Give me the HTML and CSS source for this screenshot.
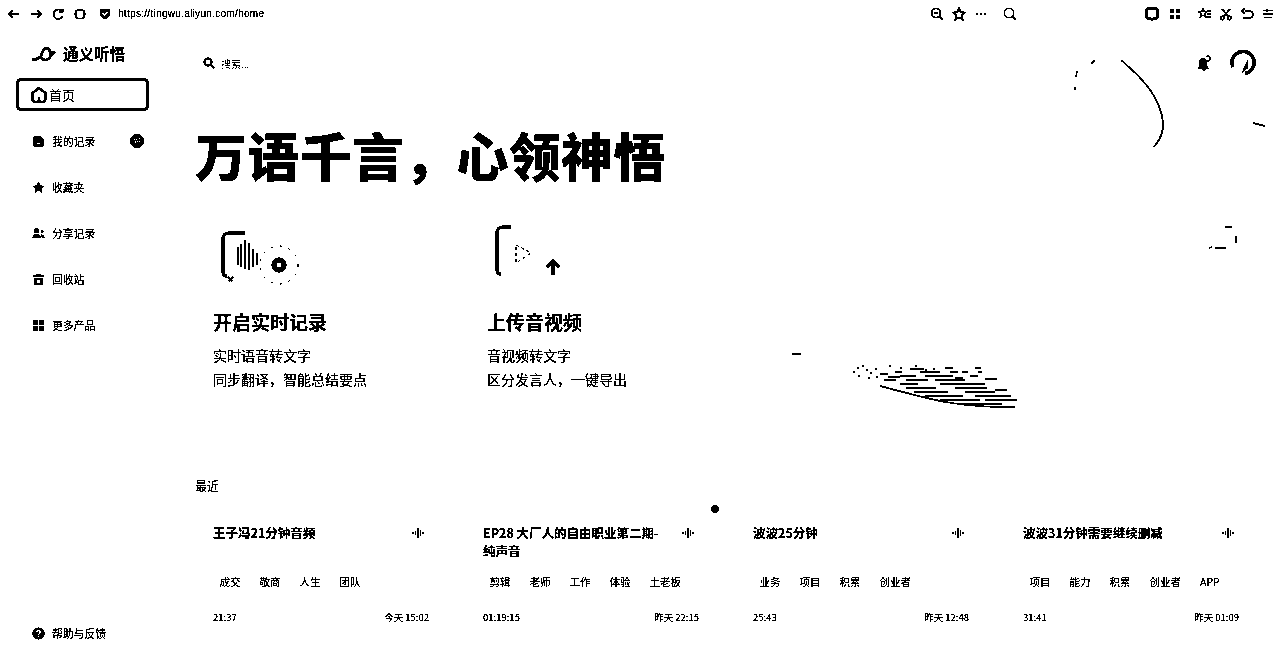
FILE: index.html
```html
<!DOCTYPE html>
<html lang="zh">
<head>
    <meta charset="UTF-8">
    <title>通义听悟</title>
    <link rel="stylesheet" href="styles.css">
</head>
<body>

    <!-- Filtro de blanco y negro -->
    <svg class="filters" width="0" height="0">
        <filter id="binarize" color-interpolation-filters="sRGB" x="0" y="0" width="100%" height="100%">
            <feColorMatrix type="saturate" values="0"/>
            <feComponentTransfer>
                <feFuncR type="discrete" tableValues="0 0 1"/>
                <feFuncG type="discrete" tableValues="0 0 1"/>
                <feFuncB type="discrete" tableValues="0 0 1"/>
            </feComponentTransfer>
        </filter>
    </svg>

    <div class="page">

        <!-- Barra del navegador -->
        <header class="browser-bar">
            <div class="bar-left">
                <svg class="bar-icon" viewBox="0 0 14 14"><path d="M12 7H2M6 3L2 7l4 4" class="line"/></svg>
                <svg class="bar-icon" viewBox="0 0 14 14"><path d="M2 7h10M8 3l4 4-4 4" class="thin"/></svg>
                <svg class="bar-icon" viewBox="0 0 14 14"><path d="M11 4.500A4.700 4.700 0 1 0 11.500 9M11.500 2v3h-3" class="line"/></svg>
                <svg class="bar-icon" viewBox="0 0 14 14"><rect x="2.500" y="3" width="9" height="8.500" rx="3" class="line"/></svg>
                <svg class="bar-icon shield" viewBox="0 0 14 14"><path d="M2 2.500h10v4.500c0 2.500-2.500 4-5 5-2.500-1-5-2.500-5-5z"/><path d="M4.500 6l2 2 3-3" class="white"/></svg>
                <span class="url">https://tingwu.aliyun.com/home</span>
            </div>
            <div class="bar-right">
                <div class="bar-group group-page">
                    <svg class="bar-icon" viewBox="0 0 14 14"><circle cx="6" cy="6" r="4.500" class="line"/><path d="M4 6h4M9.500 9.500L13 13" class="line"/></svg>
                    <svg class="bar-icon" viewBox="0 0 14 14"><path d="M7 1.500l1.700 3.700 4 .5-3 2.700.8 4L7 10.500l-3.500 1.900.8-4-3-2.700 4-.5z" class="line"/></svg>
                    <svg class="bar-icon" viewBox="0 0 14 14"><path d="M2 6h2v2H2zM6 6h2v2H6zM10 6h2v2h-2z"/></svg>
                </div>
                <svg class="bar-icon find" viewBox="0 0 14 14"><circle cx="6" cy="6" r="4.700" class="thin"/><path d="M9.500 9.500L13 13" class="thin"/></svg>
                <div class="bar-group group-tools">
                    <svg class="bar-icon" viewBox="0 0 14 14"><path d="M2.500 1.500h9a1 1 0 0 1 1 1v8a1 1 0 0 1-1 1H9L7 13l-2-1.500H2.500a1 1 0 0 1-1-1v-8a1 1 0 0 1 1-1z" class="heavy"/></svg>
                    <svg class="bar-icon" viewBox="0 0 14 14"><path d="M2 2h4v4H2zM8 2h4v4H8zM2 8h4v4H2zM8 8h4v4H8z"/></svg>
                </div>
                <div class="bar-group group-edit">
                    <svg class="bar-icon" viewBox="0 0 14 14"><path d="M5 1.500l1.200 3 3 .3-2.300 2 .7 3.200L5 8.300 2.400 10l.7-3.200-2.300-2 3-.3zM9 4h4M9 7h4M8 10h5" class="thin"/></svg>
                    <svg class="bar-icon" viewBox="0 0 14 14"><circle cx="3.500" cy="11" r="1.800" class="thin"/><circle cx="10.500" cy="11" r="1.800" class="thin"/><path d="M3 2l6.500 7.500M11 2L4.500 9.500" class="line"/></svg>
                    <svg class="bar-icon" viewBox="0 0 14 14"><path d="M5 4h4.500a3.500 3.500 0 0 1 0 7H3M4.500 1.500L2 4l2.500 2.500" class="line"/></svg>
                    <svg class="bar-icon" viewBox="0 0 14 14"><path d="M2 3.500h10M2 7h10M3.500 10.500h7M6 2v3" class="line"/></svg>
                </div>
            </div>
        </header>

        <div class="app">

            <!-- Barra lateral -->
            <aside class="sidebar">
                <div class="logo">
                    <svg class="logo-mark" viewBox="0 0 28 18"><path d="M1 15c4 1 7 0 9-3 1-4 3-8 6-8 2 0 3 2 3 5l5-1-4 3c-1 3-3 5-6 5-2 0-3-1-4-3" class="logo-line"/></svg>
                    <span>通义听悟</span>
                </div>
                <a class="nav-home">
                    <svg class="home-icon" viewBox="0 0 18 18"><path d="M9 2L2.500 7v6a3 3 0 0 0 3 3h7a3 3 0 0 0 3-3V7zM9 11v4" class="home-line"/></svg>
                    <span>首页</span>
                </a>
                <nav class="nav-list">
                    <a class="nav-item">
                        <svg class="nav-icon" viewBox="0 0 14 14"><path d="M1.500 1.500h8l3 3v8h-11zM5 8h4v1.500H5z" fill-rule="evenodd"/></svg>
                        <span>我的记录</span>
                        <em class="nav-badge">新</em>
                    </a>
                    <a class="nav-item">
                        <svg class="nav-icon" viewBox="0 0 14 14"><path d="M7 .5l2 4.300 4.700.5-3.500 3.200 1 4.600L7 10.300l-4.200 2.800 1-4.600L.3 5.300 5 4.800z"/></svg>
                        <span>收藏夹</span>
                    </a>
                    <a class="nav-item">
                        <svg class="nav-icon" viewBox="0 0 14 14"><circle cx="5" cy="4" r="2.800"/><path d="M.5 12c0-3 2-4.500 4.500-4.500S9.500 9 9.500 12z"/><circle cx="11" cy="5" r="1.500"/><path d="M10.500 12c0-1.500-.3-3-1-4 2 0 4 1 4 4z"/></svg>
                        <span>分享记录</span>
                    </a>
                    <a class="nav-item">
                        <svg class="nav-icon" viewBox="0 0 14 14"><path d="M1 2.500h12v1.500H1zM2 5h10v8H2zM5 7v3.500h4V7z" fill-rule="evenodd"/><path d="M5 1h4v1.500H5z"/></svg>
                        <span>回收站</span>
                    </a>
                    <a class="nav-item">
                        <svg class="nav-icon" viewBox="0 0 14 14"><path d="M1 1h5.300v5.300H1zM7.700 1H13v5.300H7.700zM1 7.700h5.300V13H1zM7.700 7.700H13V13H7.700z"/></svg>
                        <span>更多产品</span>
                    </a>
                </nav>
                <a class="nav-item nav-help">
                    <svg class="nav-icon" viewBox="0 0 14 14"><circle cx="7" cy="7" r="6.500"/><path d="M5 5.500C5 3.500 9 3.500 9 5.500 9 7 7 7 7 8.500M7 10v1.200" class="white"/></svg>
                    <span>帮助与反馈</span>
                </a>
            </aside>

            <!-- Contenido principal -->
            <main class="content">
                <div class="top-row">
                    <div class="search">
                        <svg class="search-icon" viewBox="0 0 12 12"><circle cx="5" cy="5" r="3.500" class="heavy"/><path d="M7.500 7.500L11 11" class="heavy"/></svg>
                        <span>搜索...</span>
                    </div>
                    <div class="user-tools">
                        <svg class="bell" viewBox="0 0 16 16"><path d="M7 3c3 0 4 2 4 4v4l2 2.500H1.500L3 11V7c0-2 1-4 4-4z"/><circle cx="8" cy="14.500" r="1.500"/><path d="M10 1.500c2-1 4 0 4 2s-2 3-3.500 2" class="thin"/></svg>
                        <svg class="avatar" viewBox="0 0 26 26"><path d="M3 17A11 11 0 1 1 22 19c-2 3-4 4-7 4" class="avatar-line"/><path d="M18 9l-4 8-2 6 6-5z"/></svg>
                    </div>
                </div>

                <h1>万语千言，心领神悟</h1>

                <section class="hero-cards">
                    <div class="hero-card">
                        <svg class="hero-art" viewBox="0 0 110 60">
                            <path d="M14 51c-3 0-4-2-4-4V14c0-4 2-6 6-6h16" class="art-thick"/>
                            <path d="M25 22v18M28 19v23M32 15v29M36 18v27M40 24v18M44 28v12" class="art-bar"/>
                            <circle cx="66" cy="40" r="19" class="art-dots"/>
                            <circle cx="66" cy="40" r="5" class="art-ring"/>
                            <path d="M16 56l4-4M15 52l4 4" class="art-bar"/>
                        </svg>
                        <h2>开启实时记录</h2>
                        <p>实时语音转文字<br>同步翻译，智能总结要点</p>
                    </div>
                    <div class="hero-card">
                        <svg class="hero-art" viewBox="0 0 110 60">
                            <path d="M14 49c-3 0-4-2-4-4V8c0-4 2-6 6-6h8" class="art-thick"/>
                            <path d="M29 20l15 8-15 10z" class="art-play"/>
                            <path d="M66 50V37M60 42l6-6 6 6" class="art-arrow"/>
                        </svg>
                        <h2>上传音视频</h2>
                        <p>音视频转文字<br>区分发言人，一键导出</p>
                    </div>
                </section>

                <h3 class="recent-label">最近</h3>

                <section class="recent-grid">
                    <article class="record">
                        <div class="record-head">
                            <h4>王子冯21分钟音频</h4>
                            <svg class="wave" viewBox="0 0 12 12"><path d="M1 5v2M3.500 4v4M6 1v10M8.500 3v6M11 5v2"/></svg>
                        </div>
                        <div class="tags"><span>成交</span><span>敬商</span><span>人生</span><span>团队</span></div>
                        <div class="record-foot"><span>21:37</span><span>今天 15:02</span></div>
                    </article>
                    <article class="record">
                        <div class="record-head">
                            <h4>EP28 大厂人的自由职业第二期-纯声音</h4>
                            <svg class="wave" viewBox="0 0 12 12"><path d="M1 5v2M3.500 4v4M6 1v10M8.500 3v6M11 5v2"/></svg>
                        </div>
                        <div class="tags"><span>剪辑</span><span>老师</span><span>工作</span><span>体验</span><span>土老板</span></div>
                        <div class="record-foot"><span>01:19:15</span><span>昨天 22:15</span></div>
                    </article>
                    <article class="record">
                        <div class="record-head">
                            <h4>波波25分钟</h4>
                            <svg class="wave" viewBox="0 0 12 12"><path d="M1 5v2M3.500 4v4M6 1v10M8.500 3v6M11 5v2"/></svg>
                        </div>
                        <div class="tags"><span>业务</span><span>项目</span><span>积累</span><span>创业者</span></div>
                        <div class="record-foot"><span>25:43</span><span>昨天 12:48</span></div>
                    </article>
                    <article class="record">
                        <div class="record-head">
                            <h4>波波31分钟需要继续删减</h4>
                            <svg class="wave" viewBox="0 0 12 12"><path d="M1 5v2M3.500 4v4M6 1v10M8.500 3v6M11 5v2"/></svg>
                        </div>
                        <div class="tags"><span>项目</span><span>能力</span><span>积累</span><span>创业者</span><span>APP</span></div>
                        <div class="record-foot"><span>31:41</span><span>昨天 01:09</span></div>
                    </article>
                </section>
            </main>
        </div>

        <!-- Trazos decorativos del fondo -->
        <svg class="backdrop" viewBox="0 0 1280 664">
            <path d="M1121 60C1142 78 1160 96 1163 122 1164 132 1160 140 1154 147" class="swirl"/>
            <path d="M1095 60l-4 4M1077 71l-1 6M1075 87v3M1253 123l12 3M1212 247l-3 1M1225 227h7M1236 236v7M1215 248h11M792 354h9" class="swirl"/>
            <path d="M880 386C920 396 950 408 1015 407" class="swirl"/>
            <path d="M880 374h8M888 377h12M884 380h12M895 372h7M900 376h16M906 380h22M900 384h18M906 388h30M914 392h34M925 396h38M940 400h40M958 404h44M910 369h14M920 372h20M925 376h28M935 380h30M940 384h38M955 388h32M965 392h30M975 396h36M985 400h32M975 368h6M945 368h8M950 372h8M962 372h6M955 378h8M975 384h10M985 379h12M970 376h8M995 390h12M978 372h4" class="feather"/>
            <path d="M853 372h2M857 368h2M862 366h2M866 370h2M870 373h2M875 369h2M858 376h2M868 378h2M876 377h2M889 366h2M900 368h2M915 366h2M925 370h2M933 369h2" class="feather"/>
            <circle cx="715" cy="509" r="4"/>
        </svg>
    </div>

</body>
</html>
```

FILE: styles.css
```css
/* Estilos generales */
html, body {
    margin: 0;
    padding: 0;
    background: #fff;
}

body {
    font-family: "Noto Sans CJK SC", "Noto Sans", sans-serif;
    color: #000;
    overflow: hidden;
}

.filters {
    position: absolute;
}

.page {
    position: relative;
    width: 1280px;
    height: 664px;
    background: #fff;
    overflow: hidden;
    filter: url(#binarize);
}

.line, .thin, .heavy, .white, .home-line, .logo-line, .art-thick, .art-bar, .art-dots, .art-play, .art-ring, .art-arrow, .swirl, .feather, .avatar-line {
    fill: none;
    stroke: #000;
}

.line { stroke-width: 1.7; }
.thin { stroke-width: 1.2; }
.heavy { stroke-width: 2.2; }
.white { stroke: #fff; stroke-width: 1.6; }

/* Barra del navegador */
.browser-bar {
    display: flex;
    justify-content: space-between;
    align-items: center;
    height: 27px;
    padding: 0 5px 0 7px;
}

.bar-left, .bar-right, .bar-group {
    display: flex;
    align-items: center;
}

.bar-left {
    gap: 8px;
}

.bar-icon {
    width: 14px;
    height: 14px;
    flex: none;
}

.shield {
    margin-left: 3px;
}

.url {
    font-family: "Liberation Sans", sans-serif;
    font-size: 10px;
    letter-spacing: .3px;
    margin-left: -2px;
}

.group-page {
    gap: 8px;
}

.find {
    margin-left: 15px;
}

.group-tools {
    gap: 9px;
    margin-left: 128px;
}

.group-edit {
    gap: 7px;
    margin-left: 16px;
}

/* Barra lateral */
.app {
    display: flex;
    height: 637px;
}

.sidebar {
    display: flex;
    flex-direction: column;
    width: 165px;
    flex: none;
    box-sizing: border-box;
    padding: 16px 16px 19px;
}

.logo {
    display: flex;
    align-items: center;
    gap: 4px;
    height: 20px;
    padding-left: 15px;
    font-size: 15.500px;
    font-weight: 700;
}

.logo-mark {
    width: 28px;
    height: 18px;
}

.logo-line {
    stroke-width: 2.400;
}

.nav-home {
    display: flex;
    align-items: center;
    gap: 1px;
    width: 133px;
    height: 33px;
    margin-top: 15px;
    box-sizing: border-box;
    padding-left: 11px;
    border: 3px solid #000;
    border-radius: 5px;
    font-size: 13px;
}

.home-icon {
    width: 18px;
    height: 18px;
}

.home-line {
    stroke-width: 2.400;
}

.nav-list {
    display: flex;
    flex-direction: column;
    margin-top: 7px;
}

.nav-item {
    display: flex;
    align-items: center;
    gap: 7px;
    height: 46px;
    padding-left: 16px;
    font-size: 10.800px;
}

.nav-icon {
    width: 13px;
    height: 13px;
    flex: none;
}

.nav-badge {
    display: flex;
    align-items: center;
    justify-content: center;
    width: 14px;
    height: 14px;
    margin-left: auto;
    margin-right: 5px;
    border-radius: 50%;
    background: #000;
    color: #fff;
    font-size: 8px;
    font-style: normal;
}

.nav-help {
    height: 24px;
    margin-top: auto;
}

/* Contenido principal */
.content {
    flex: 1;
    padding: 26px 0 0 30px;
    min-width: 0;
}

.top-row {
    display: flex;
    justify-content: space-between;
    align-items: center;
    height: 20px;
    padding: 0 24px 0 8px;
}

.search {
    display: flex;
    align-items: center;
    gap: 6px;
    font-size: 10px;
    color: #555;
}

.search-icon {
    width: 12px;
    height: 12px;
}

.user-tools {
    display: flex;
    align-items: center;
    gap: 18px;
}

.bell {
    width: 16px;
    height: 16px;
}

.avatar {
    width: 26px;
    height: 26px;
}

.avatar-line {
    stroke-width: 3.400;
}

h1 {
    margin: 52px 0 0;
    font-size: 52px;
    line-height: 60px;
    font-weight: 900;
    letter-spacing: .3px;
}

.hero-cards {
    display: flex;
    margin-top: 40px;
    padding-left: 18px;
}

.hero-card {
    width: 274px;
}

.hero-art {
    display: block;
    width: 110px;
    height: 60px;
}

.art-thick { stroke-width: 3; }
.art-bar { stroke-width: 1.800; }
.art-dots { stroke-width: .9; stroke-dasharray: 2 7; }
.art-play { stroke-width: 1; stroke-dasharray: 3 3; }
.art-ring { stroke-width: 5; }
.art-arrow { stroke-width: 3.200; }

.hero-card h2 {
    margin: 23px 0 0;
    font-size: 19px;
    line-height: 28px;
    font-weight: 700;
}

.hero-card p {
    margin: 7px 0 0;
    font-size: 14px;
    line-height: 24px;
}

.recent-label {
    margin: 87px 0 0;
    font-size: 12px;
    line-height: 16px;
    font-weight: 400;
}

.recent-grid {
    display: grid;
    grid-template-columns: repeat(4, 216px);
    gap: 54px;
    margin-top: 30px;
    padding-left: 18px;
}

.record-head {
    display: flex;
    justify-content: space-between;
    height: 36px;
}

.record-head h4 {
    margin: 0;
    max-width: 185px;
    font-size: 12.500px;
    line-height: 18px;
    font-weight: 700;
}

.wave {
    width: 12px;
    height: 12px;
    margin: 3px 5px 0 0;
    flex: none;
    fill: none;
    stroke: #000;
    stroke-width: 1;
}

.tags {
    display: flex;
    gap: 6px;
    margin-top: 14px;
    font-size: 10.500px;
    line-height: 16px;
}

.tags span {
    padding: 0 6.500px;
}

.record-foot {
    display: flex;
    justify-content: space-between;
    margin-top: 20px;
    font-size: 9.500px;
    line-height: 14px;
}

/* Trazos del fondo */
.backdrop {
    position: absolute;
    top: 0;
    left: 0;
    width: 1280px;
    height: 664px;
    pointer-events: none;
}

.swirl {
    stroke-width: 1.500;
}

.feather {
    stroke-width: 1;
}
```
